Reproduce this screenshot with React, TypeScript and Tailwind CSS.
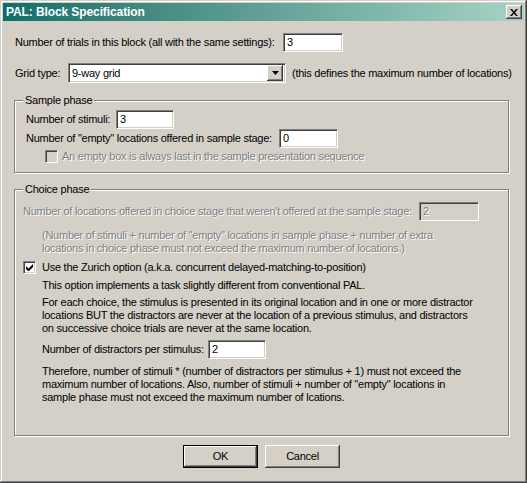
import React from 'react'

const face = 'bg-[#d4d0c8]'
const sunken =
  'border border-t-[#808080] border-l-[#808080] border-b-white border-r-white shadow-[inset_1px_1px_0_#404040,inset_-1px_-1px_0_#d4d0c8]'
const raised =
  'shadow-[inset_-1px_-1px_0_#404040,inset_1px_1px_0_#fff,inset_-2px_-2px_0_#808080,inset_2px_2px_0_#d4d0c8]'
const disabledText = 'text-[#808080] [text-shadow:1px_1px_0_#fff]'

function TextBox({ value, width, disabled }: { value: string; width: string; disabled?: boolean }) {
  return (
    <div
      className={`${sunken} ${width} h-[19px] flex items-center pl-[3px] shrink-0 ${
        disabled ? `${face} ${disabledText}` : 'bg-white text-black'
      }`}
    >
      {value}
    </div>
  )
}

function CheckBox({ checked, disabled }: { checked?: boolean; disabled?: boolean }) {
  return (
    <div className={`${sunken} w-[13px] h-[13px] flex items-center justify-center shrink-0 ${disabled ? face : 'bg-white'}`}>
      {checked && (
        <svg width="7" height="7" viewBox="0 0 7 7">
          <path d="M0 2v3l2 2h1l4-4V0L2.5 4.5z" fill="#000" />
        </svg>
      )}
    </div>
  )
}

function GroupBox({ title, className, children }: { title: string; className: string; children: React.ReactNode }) {
  return (
    <div
      className={`relative border border-[#808080] shadow-[inset_1px_1px_0_#fff,1px_1px_0_#fff] w-[495px] ${className}`}
    >
      <span className={`absolute -top-[8px] left-[8px] px-[2px] ${face} leading-[14px]`}>{title}</span>
      {children}
    </div>
  )
}

export default function App() {
  return (
    <div
      className={`w-[527px] h-[483px] ${face} p-[3px] flex flex-col text-[11px] leading-[13px] tracking-[-0.25px] whitespace-nowrap text-black shadow-[inset_-1px_-1px_0_#404040,inset_1px_1px_0_#d4d0c8,inset_-2px_-2px_0_#808080,inset_2px_2px_0_#fff]`}
      style={{ fontFamily: '"Liberation Sans", Arial, sans-serif' }}
    >
      {/* Title bar */}
      <div className="h-[18px] flex items-center justify-between bg-gradient-to-r from-[#0a6f68] to-[#a6d4c6] pl-[3px] pr-[2px]">
        <span className="text-white font-bold text-[12px] tracking-[-0.1px]">PAL: Block Specification</span>
        <div className={`${face} ${raised} w-[16px] h-[14px] flex items-center justify-center`}>
          <svg width="8" height="7" viewBox="0 0 8 7">
            <path d="M0 0h2l2 2.5L6 0h2L5 3.5 8 7H6L4 4.5 2 7H0l3-3.5z" fill="#000" />
          </svg>
        </div>
      </div>

      <div className="px-[11px] flex flex-col">
        {/* trials */}
        <div className="mt-[11px] flex items-center h-[20px] pl-[1px]">
          <span className="w-[268px]">Number of trials in this block (all with the same settings):</span>
          <TextBox value="3" width="w-[60px]" />
        </div>

        {/* grid type */}
        <div className="mt-[11px] flex items-center h-[20px] pl-[1px]">
          <span className="w-[53px]">Grid type:</span>
          <div className={`${sunken} bg-white w-[218px] h-[20px] flex items-center justify-between pl-[3px] pr-[2px]`}>
            <span>9-way grid</span>
            <div className={`${face} ${raised} w-[16px] h-[16px] flex items-center justify-center`}>
              <svg width="7" height="4" viewBox="0 0 7 4">
                <path d="M0 0h7L3.5 4z" fill="#000" />
              </svg>
            </div>
          </div>
          <span className="ml-[6px]">(this defines the maximum number of locations)</span>
        </div>

        {/* Sample phase */}
        <GroupBox title="Sample phase" className="mt-[17px] h-[73px] pl-[11px] pt-[9px]">
          <div className="flex items-center h-[18px]">
            <span className="w-[90px]">Number of stimuli:</span>
            <TextBox value="3" width="w-[58px]" />
          </div>
          <div className="mt-[1px] flex items-center h-[19px]">
            <span className="w-[253px]">Number of &quot;empty&quot; locations offered in sample stage:</span>
            <TextBox value="0" width="w-[59px]" />
          </div>
          <div className="mt-[2px] flex items-center pl-[19px] h-[13px]">
            <CheckBox disabled />
            <span className={`ml-[4px] ${disabledText}`}>An empty box is always last in the sample presentation sequence</span>
          </div>
        </GroupBox>

        {/* Choice phase */}
        <GroupBox title="Choice phase" className="mt-[16px] h-[247px] pl-[8px] pt-[11px]">
          <div className="flex items-center h-[20px]">
            <span className={`w-[396px] ${disabledText}`}>
              Number of locations offered in choice stage that weren't offered at the sample stage:
            </span>
            <TextBox value="2" width="w-[60px]" disabled />
          </div>
          <p className={`mt-[8px] pl-[19px] ${disabledText}`}>
            (Number of stimuli + number of &quot;empty&quot; locations in sample phase + number of extra
            <br />
            locations in choice phase must not exceed the maximum number of locations.)
          </p>
          <div className="mt-[6px] flex items-center h-[13px]">
            <CheckBox checked />
            <span className="ml-[6px]">Use the Zurich option (a.k.a. concurrent delayed-matching-to-position)</span>
          </div>
          <div className="pl-[19px]">
            <p className="mt-[5px]">This option implements a task slightly different from conventional PAL.</p>
            <p className="mt-[4px]">
              For each choice, the stimulus is presented in its original location and in one or more distractor
              <br />
              locations BUT the distractors are never at the location of a previous stimulus, and distractors
              <br />
              on successive choice trials are never at the same location.
            </p>
            <div className="mt-[5px] flex items-center h-[19px]">
              <span className="w-[166px]">Number of distractors per stimulus:</span>
              <TextBox value="2" width="w-[58px]" />
            </div>
            <p className="mt-[6px]">
              Therefore, number of stimuli * (number of distractors per stimulus + 1) must not exceed the
              <br />
              maximum number of locations. Also, number of stimuli + number of &quot;empty&quot; locations in
              <br />
              sample phase must not exceed the maximum number of lcations.
            </p>
          </div>
        </GroupBox>

        {/* Buttons */}
        <div className="mt-[9px] flex justify-center gap-[7px] pr-[4px]">
          <div className="w-[75px] h-[23px] border border-black">
            <div className={`${face} ${raised} w-full h-full flex items-center justify-center`}>OK</div>
          </div>
          <div className={`${face} ${raised} w-[75px] h-[23px] flex items-center justify-center`}>Cancel</div>
        </div>
      </div>
    </div>
  )
}
